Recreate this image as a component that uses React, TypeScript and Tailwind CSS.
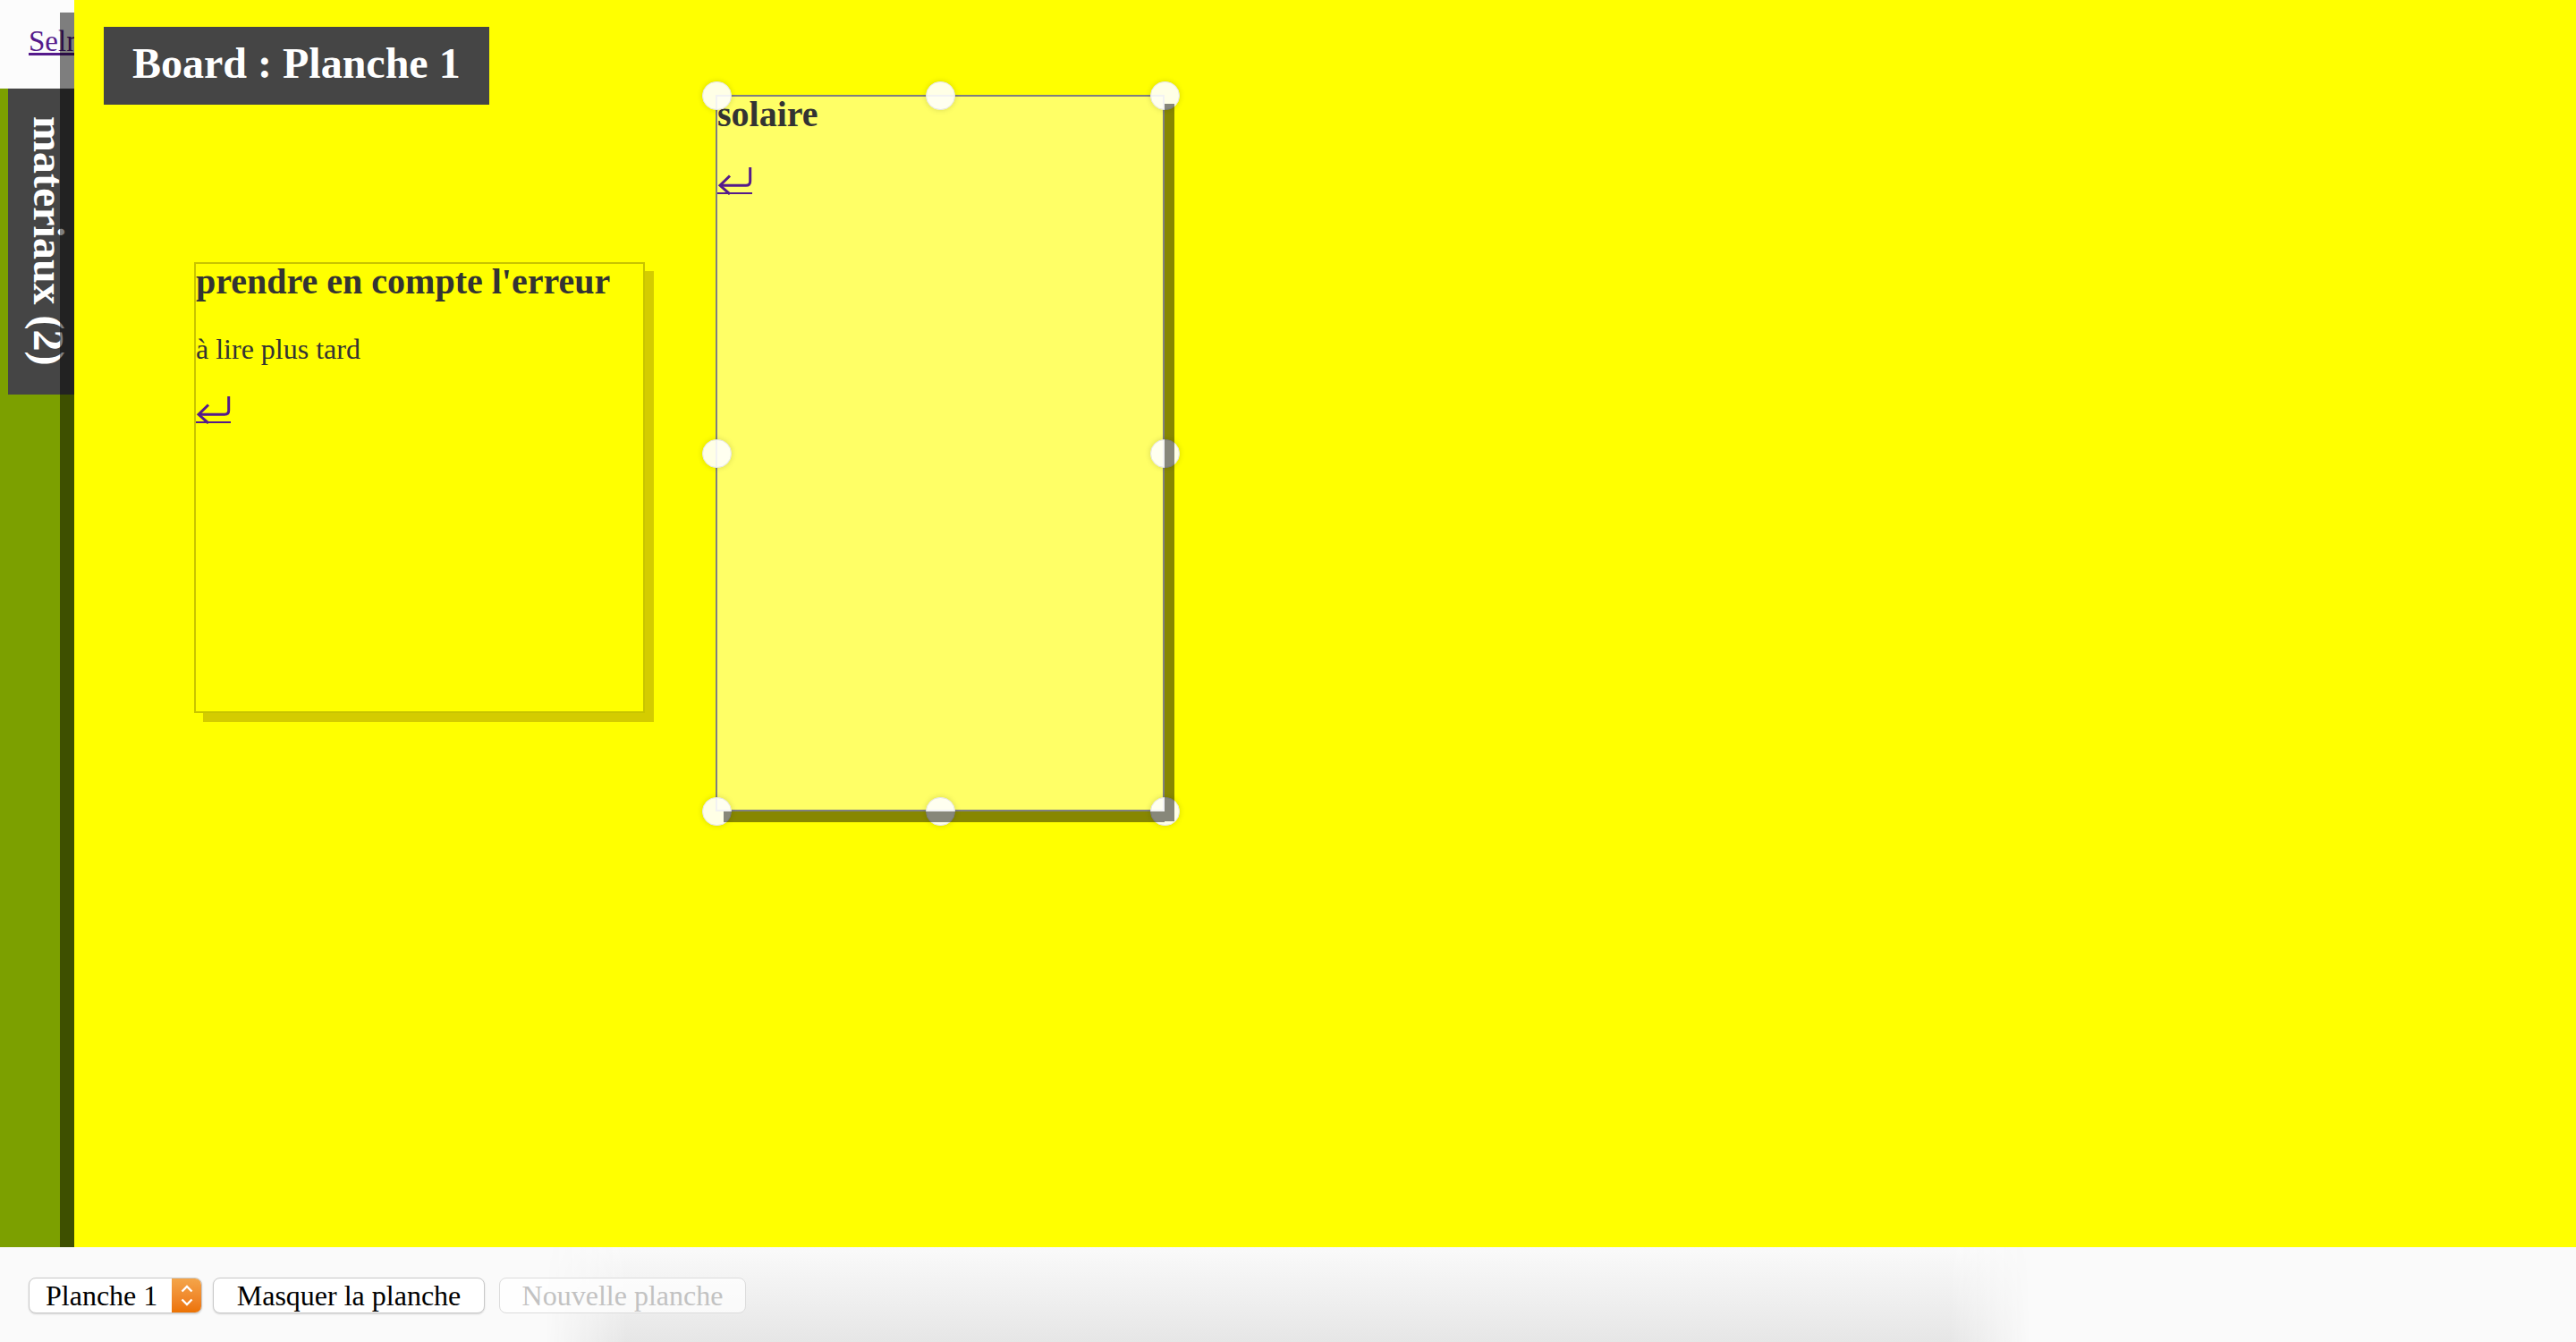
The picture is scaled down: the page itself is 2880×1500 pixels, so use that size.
import React from 'react';

const serif = "font-['Liberation_Serif','Times_New_Roman',serif]";

const ReturnArrow: React.FC = () => (
  <a href="#" className="block w-[39px] h-[31px]" aria-label="retour">
    <svg width="39" height="31" viewBox="0 0 39 31" fill="none">
      <path d="M36.7 0 V15.5 Q36.7 20.3 32 20.3 H3" stroke="#551a8b" strokeWidth="3" />
      <path d="M14 9.5 L3 20.3 L14 30" stroke="#551a8b" strokeWidth="3" strokeLinejoin="miter" />
      <rect x="0" y="28" width="39" height="2" fill="#551a8b" />
    </svg>
  </a>
);

const Handle: React.FC<{ pos: string }> = ({ pos }) => (
  <span
    className={`absolute w-[33px] h-[32px] -ml-[16px] -mt-[16px] rounded-full bg-white/90 border border-[#e4e4e4] shadow-[0_0_6px_rgba(0,0,0,0.15)] ${pos}`}
  />
);

export default function App() {
  return (
    <div className={`flex flex-col w-[2880px] h-[1500px] overflow-hidden ${serif}`}>
      <div className="flex h-[1394px]">
        {/* left drawer */}
        <aside className="relative w-[83px] shrink-0 overflow-hidden bg-[#7ca000]">
          <div className="h-[99px] bg-[#fcfcfc] pl-[32px] pt-[28px] whitespace-nowrap">
            <a href="#" className="text-[33px] leading-[37px] text-[#551a8b] underline">
              Selnotes
            </a>
          </div>
          <div className="ml-[9px] h-[342px] bg-[#454545] pl-[18px] py-[31px]">
            <span className="[writing-mode:vertical-rl] text-[48px] leading-[55px] font-bold text-white whitespace-nowrap">
              materiaux (2)
            </span>
          </div>
          <div className="absolute right-0 top-[14px] bottom-0 w-[16px] bg-black/50" />
        </aside>

        {/* board */}
        <main className="relative flex-1 bg-[#ffff00]">
          <h1 className="inline-block ml-[33px] mt-[30px] bg-[#454545] px-[32px] pt-[13px] pb-[19px] text-[48px] leading-[55px] font-bold text-white">
            Board : Planche 1
          </h1>

          {/* note 1 */}
          <div className="absolute left-[134px] top-[293px] w-[504px] h-[504px] border-2 border-[#c8c400] bg-[#ffff00] shadow-[10px_10px_0_#d4cc00] text-[#333]">
            <h3 className="text-[40px] leading-[40px] font-bold">prendre en compte l'erreur</h3>
            <p className="mt-[38px] text-[32px] leading-[35px]">à lire plus tard</p>
            <div className="mt-[35px]">
              <ReturnArrow />
            </div>
          </div>

          {/* note 2, selected */}
          <div className="absolute left-[717px] top-[106px] w-[502px] h-[801px]">
            <div className="w-full h-full border-2 border-[#7f7f7f] bg-[#ffff66] text-[#333]">
              <h3 className="text-[40px] leading-[40px] font-bold">solaire</h3>
              <div className="mt-[39px]">
                <ReturnArrow />
              </div>
            </div>
            <Handle pos="left-[1px] top-[1px]" />
            <Handle pos="left-1/2 top-[1px]" />
            <Handle pos="left-full top-[1px]" />
            <Handle pos="left-[1px] top-1/2" />
            <Handle pos="left-full top-1/2" />
            <Handle pos="left-[1px] top-full" />
            <Handle pos="left-1/2 top-full" />
            <Handle pos="left-full top-full" />
            <div className="absolute left-full top-[10px] w-[11px] h-[802px] bg-black/[0.47]" />
            <div className="absolute left-[9px] top-full w-[493px] h-[12px] bg-black/[0.47]" />
          </div>
        </main>
      </div>

      {/* bottom toolbar */}
      <footer className="relative flex-1 bg-[#fafafa]">
        <div className="absolute left-[610px] top-0 w-[1660px] h-full bg-gradient-to-b from-[#fafafa] to-[#e6e6e6] [mask-image:linear-gradient(to_right,transparent,black_90px,black_calc(100%-90px),transparent)]" />
        <div className="relative flex items-center pl-[32px] pt-[34px]">
          <div className="flex h-[40px] w-[194px] rounded-[8px] border border-[#c9c9c9] bg-white shadow-[0_1px_2px_rgba(0,0,0,0.15)] overflow-hidden">
            <select className="flex-1 appearance-none bg-transparent pl-[18px] text-[32px] leading-[38px] text-black outline-none">
              <option>Planche 1</option>
            </select>
            <span className="flex w-[33px] flex-col items-center justify-center gap-[6px] bg-gradient-to-b from-[#f4a549] to-[#ec7200]">
              <svg width="14" height="9" viewBox="0 0 14 9" fill="none">
                <path d="M1.5 7.5 L7 2 L12.5 7.5" stroke="white" strokeWidth="2.4" />
              </svg>
              <svg width="14" height="9" viewBox="0 0 14 9" fill="none">
                <path d="M1.5 1.5 L7 7 L12.5 1.5" stroke="white" strokeWidth="2.4" />
              </svg>
            </span>
          </div>
          <button className="ml-[12px] h-[40px] w-[304px] rounded-[8px] border border-[#c9c9c9] bg-white shadow-[0_1px_2px_rgba(0,0,0,0.15)] text-[32px] leading-[38px] text-black">
            Masquer la planche
          </button>
          <button
            disabled
            className="ml-[16px] h-[40px] w-[276px] rounded-[8px] border border-[#dcdcdc] bg-white/70 text-[32px] leading-[38px] text-[#c2c2c2]"
          >
            Nouvelle planche
          </button>
        </div>
      </footer>
    </div>
  );
}
